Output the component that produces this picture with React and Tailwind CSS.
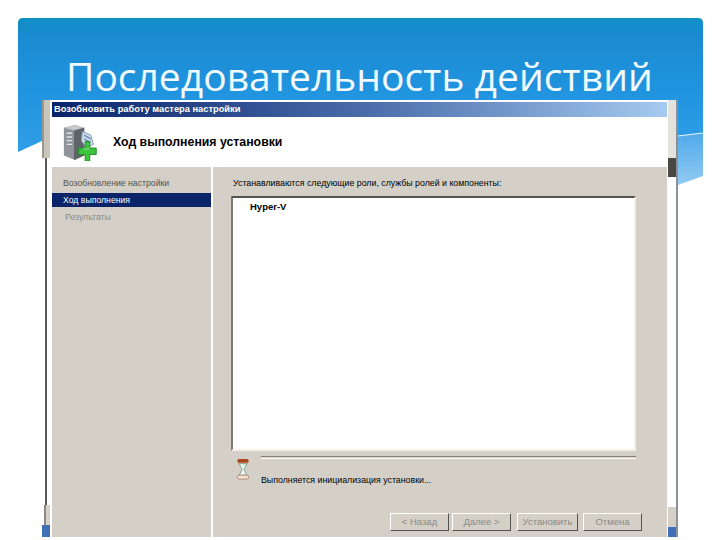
const dialogFont = { fontFamily: '"Liberation Sans", Arial, sans-serif' };

const Banner = () => (
  <svg className="absolute left-0 top-0" width="720" height="200" viewBox="0 0 720 200">
    <defs>
      <linearGradient id="sky" x1="0" y1="0" x2="0" y2="1">
        <stop offset="0" stopColor="#0f8fc4" />
        <stop offset="0.12" stopColor="#1a8bd0" />
        <stop offset="0.55" stopColor="#2194e0" />
        <stop offset="1" stopColor="#2f9fe6" />
      </linearGradient>
      <linearGradient id="swell" x1="0" y1="0" x2="0" y2="1">
        <stop offset="0" stopColor="#4fa9ea" />
        <stop offset="1" stopColor="#93cbf3" />
      </linearGradient>
    </defs>
    <path d="M23 18H698Q703 18 703 23V134L678 136V100H42V141L18 152V23Q18 18 23 18Z" fill="url(#sky)" />
    <path d="M678 136L703 133V176L678 185Z" fill="url(#swell)" />
    <path d="M678 136L703 133" stroke="#eaf5fd" strokeWidth="1" fill="none" />
  </svg>
);

const ServerIcon = () => (
  <svg width="37" height="37" viewBox="0 0 40 40">
    <path d="M2 4L14 1L24 4V34L14 39L2 34Z" fill="#8e9499" />
    <path d="M2 4L14 1L24 4L13 7Z" fill="#c4c8cb" />
    <path d="M13 7L24 4V34L13 39Z" fill="#5f6468" />
    <path d="M5 10H11M5 14H11M5 18H11M5 22H11" stroke="#dfe2e4" strokeWidth="1.5" />
    <path d="M22 8L31 12L34 22L26 26L21 18Z" fill="#cfdcec" stroke="#7f97b8" strokeWidth="1" />
    <path d="M24 12L31 16M24 16L31 20" stroke="#6b8cb8" strokeWidth="1.5" />
    <path d="M21 24H28V17H33V24H40V31H33V38H28V31H21Z" transform="translate(-3 2)" fill="#3cc43c" stroke="#1f8a2a" strokeWidth="1" />
    <path d="M23 27H30" stroke="#9be39b" strokeWidth="1" />
  </svg>
);

const Hourglass = () => (
  <svg width="14" height="21" viewBox="0 0 14 22">
    <rect x="1" y="0" width="12" height="4" rx="2" fill="#a8451c" />
    <rect x="2" y="4" width="10" height="1" fill="#d98a55" />
    <path d="M3 5H11L8 11L11 17H3L6 11Z" fill="#eef5ef" stroke="#7fa896" strokeWidth="1" />
    <rect x="1" y="17" width="12" height="4" rx="2" fill="#f3e4d6" stroke="#a8705a" strokeWidth="0.75" />
  </svg>
);

const WizardButton = ({ label, width }) => (
  <div className={`${width} h-[18px] flex items-center justify-center bg-[#d4d0c8] border border-t-white border-l-white border-r-[#55534e] border-b-[#55534e] text-[9.5px] text-[#8b8985]`}>
    {label}
  </div>
);

export default function App() {
  return (
    <div className="relative w-[720px] h-[540px] bg-white overflow-hidden">
      <Banner />

      <div className="relative flex flex-col pt-[52px]">
        <h1 className="relative z-10 h-[48px] pl-[66px] text-[39px] leading-[48px] text-[#f1fafe] whitespace-nowrap" style={{ fontFamily: '"Open Sans", sans-serif' }}>
          Последовательность действий
        </h1>

        {/* screenshot of the wizard */}
        <div className="flex ml-[42px] w-[636px] h-[437px] bg-white" style={dialogFont}>
          {/* left window edge */}
          <div className="w-[10px] flex flex-col pr-[2px]">
            <div className="h-[58px] bg-[#c9c5bb] border-l-2 border-[#9a978f]" />
            <div className="flex-1 ml-[3px] border-l-2 border-[#55585c]" />
            <div className="h-[20px] ml-[2px] bg-[#d4d0c8] border-l-2 border-[#8b8985]" />
            <div className="h-[12px] bg-[#3f6fb5]" />
          </div>

          <div className="w-[615px] flex flex-col">
            <div className="h-[15px] flex items-center pl-[2px] mt-[2px] bg-gradient-to-r from-[#0a246a] via-[#4a6aa8] to-[#a6caf0] text-[9.3px] font-bold text-white">
              Возобновить работу мастера настройки
            </div>
            <div className="h-[50px] flex items-center pl-[10px] gap-[14px] bg-white">
              <ServerIcon />
              <span className="text-[12.3px] font-bold text-black">Ход выполнения установки</span>
            </div>

            <div className="flex flex-1">
              <div className="w-[159px] flex flex-col pt-[9px] bg-[#d4d0c8] text-[8.7px]">
                <div className="h-[14px] pl-[11px] leading-[14px] text-[#55534e]">Возобновление настройки</div>
                <div className="h-[14px] mt-[3px] pl-[11px] leading-[14px] bg-[#0a246a] text-white">Ход выполнения</div>
                <div className="h-[14px] mt-[3px] pl-[13px] leading-[14px] text-[#8b8985]">Результаты</div>
              </div>

              <div className="flex-1 ml-[2px] flex flex-col bg-[#d4d0c8]">
                <div className="h-[29px] pt-[9px] pl-[20px] text-[8.8px] leading-[14px] text-black">
                  Устанавливаются следующие роли, службы ролей и компоненты:
                </div>
                <div className="ml-[18px] w-[405px] h-[255px] pt-[2px] pl-[17px] bg-white border-2 border-t-[#55534e] border-l-[#7d7a73] border-r-[#f2efe8] border-b-[#f2efe8] text-[9.5px] font-bold text-black">
                  Hyper-V
                </div>

                <div className="flex mt-[3px] ml-[23px]">
                  <div className="mt-[5px]"><Hourglass /></div>
                  <div className="flex-1 ml-[11px] mr-[31px] flex flex-col">
                    <div className="mt-[2px] h-[3px] border-t border-[#85827b] border-b border-b-white" />
                    <div className="mt-[14px] text-[8.8px] leading-[14px] text-black">
                      Выполняется инициализация установки...
                    </div>
                  </div>
                </div>

                <div className="flex mt-[26px] ml-[177px]">
                  <WizardButton label="< Назад" width="w-[59px]" />
                  <div className="w-[3px]" />
                  <WizardButton label="Далее >" width="w-[59px]" />
                  <div className="w-[6px]" />
                  <WizardButton label="Установить" width="w-[61px]" />
                  <div className="w-[5px]" />
                  <WizardButton label="Отмена" width="w-[59px]" />
                </div>
              </div>
            </div>
          </div>

          {/* right window edge */}
          <div className="w-[11px] flex flex-col pl-[1px] border-r-2 border-[#8b9198]">
            <div className="h-[58px] bg-[#e4e2dc]" />
            <div className="h-[19px] bg-[#4a4844]" />
            <div className="flex-1" />
            <div className="h-[20px] bg-[#d4d0c8]" />
            <div className="h-[10px] bg-[#3f6fb5]" />
          </div>
        </div>
      </div>
    </div>
  );
}
